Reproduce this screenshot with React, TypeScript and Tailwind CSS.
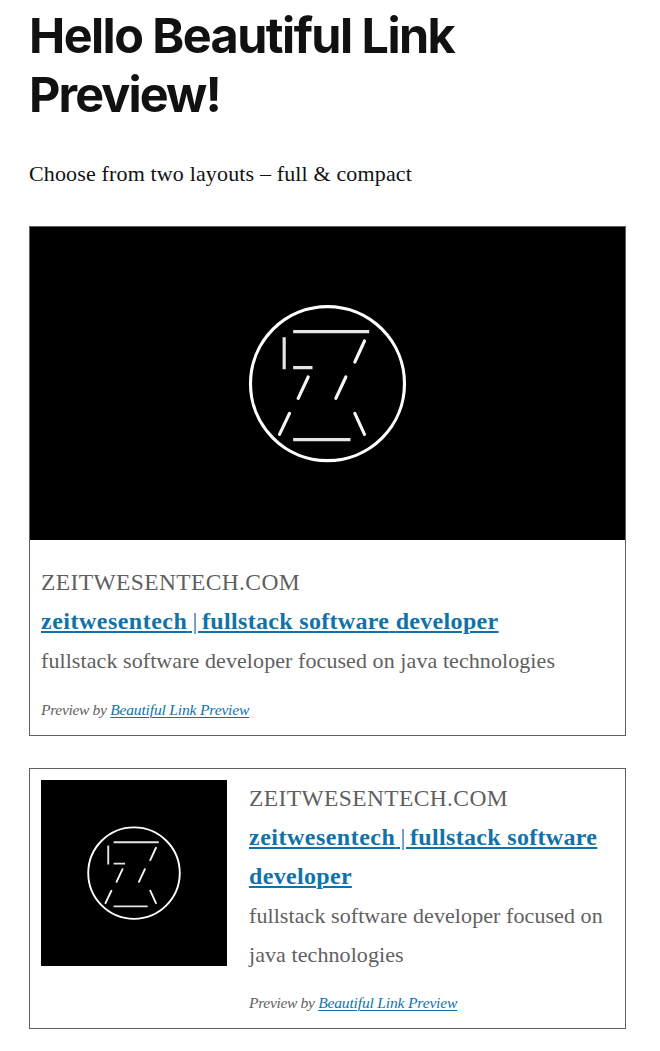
import React from "react";

function Logo({ className }: { className: string }) {
  return (
    <svg
      viewBox="-176.5 -190 939 939"
      className={className}
      fill="none"
      stroke="#fff"
      strokeWidth="9.5"
      role="img"
      aria-label="zeitwesentech"
    >
      <circle cx="293" cy="280" r="231" />
      <g stroke="#e6e4e4">
        <path d="M190 124H418M163 141V237M190 232H248M190 448H362" />
      </g>
      <g strokeLinecap="round" stroke="#f6f6f6">
        <path d="M404 152L375 215M235 260L205 324M348 260L318 324M179 369L149 432M375 369L404 432" />
      </g>
    </svg>
  );
}

function Credit() {
  return (
    <p className="text-[15.6px] italic leading-[28px]">
      <span className="tracking-[-0.35px]">Preview by </span>
      <a
        href="#"
        className="tracking-[-0.19px] text-[#0f73aa] underline decoration-1 underline-offset-2"
      >
        Beautiful Link Preview
      </a>
    </p>
  );
}

function Summary() {
  return (
    <div className="leading-[39px]">
      <p className="text-[23.5px] tracking-[0.38px]">ZEITWESENTECH.COM</p>
      <p className="text-[24px]">
        <a
          href="#"
          className="font-bold tracking-[0.32px] text-[#0f73aa] underline decoration-2 underline-offset-2"
        >
          <span className="tracking-[0.49px]">zeitwesentech</span>
          <span className="font-normal tracking-[-0.7px]"> | </span>
          <span>fullstack software</span> <span>developer</span>
        </a>
      </p>
      <p className="text-[22px] tracking-[0.08px]">
        fullstack software developer focused on java technologies
      </p>
    </div>
  );
}

export default function App() {
  return (
    <main className="h-[1051px] overflow-hidden bg-white pl-[29px] pr-[34px] pt-[6px] font-['Liberation_Serif',serif] text-[#5f5f5f]">
      <h1 className="font-['Inter',sans-serif] text-[48.5px] font-bold leading-[59.4px] tracking-[-1.56px] text-[#111]">
        Hello Beautiful Link
        <br />
        <span className="tracking-[-1.9px]">Preview!</span>
      </h1>
      <p className="mt-[29px] text-[22px] leading-[39px] tracking-[0.15px] text-[#111]">
        Choose from two layouts – full &amp; compact
      </p>

      <article className="mt-[33px] h-[510px] border border-[#5f5f5f]">
        <div className="flex h-[313px] justify-center bg-black">
          <Logo className="size-[313px]" />
        </div>
        <div className="px-[11px] pt-[23px]">
          <Summary />
          <div className="pt-[16px]">
            <Credit />
          </div>
        </div>
      </article>

      <article className="mt-[32px] flex h-[261px] gap-[22px] border border-[#5f5f5f] px-[11px] pt-[11px]">
        <div className="size-[186px] shrink-0 bg-black">
          <Logo className="size-[186px]" />
        </div>
        <div className="-mt-px min-w-0 flex-1">
          <Summary />
          <div className="pt-[15px]">
            <Credit />
          </div>
        </div>
      </article>
    </main>
  );
}
